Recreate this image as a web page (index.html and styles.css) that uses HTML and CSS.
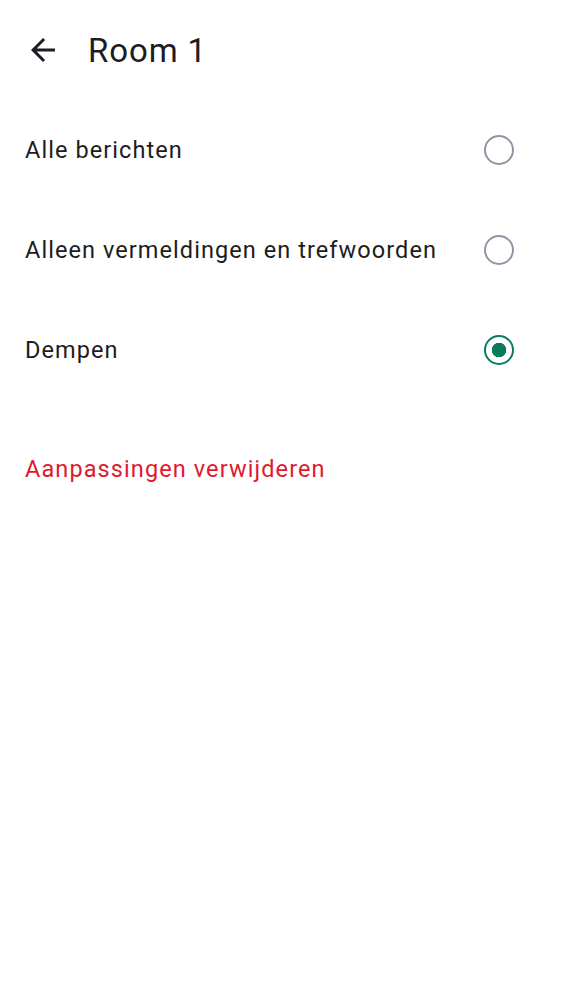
FILE: index.html
```html
<!DOCTYPE html>
<html lang="nl">
<head>
<meta charset="utf-8">
<link rel="stylesheet" href="styles.css">
</head>
<body>
<div class="app">
  <header class="topbar">
    <button class="back" aria-label="Terug">
      <svg width="36" height="36" viewBox="0 0 24 24"><path d="M20 11H7.83l5.59-5.59L12 4l-8 8 8 8 1.41-1.41L7.83 13H20v-2z" fill="#1b1d22"/></svg>
    </button>
    <h1 class="title">Room 1</h1>
  </header>
  <ul class="options">
    <li class="option"><span class="label">Alle berichten</span><span class="radio"></span></li>
    <li class="option"><span class="label">Alleen vermeldingen en trefwoorden</span><span class="radio"></span></li>
    <li class="option"><span class="label">Dempen</span><span class="radio checked"></span></li>
  </ul>
  <div class="reset">Aanpassingen verwijderen</div>
</div>
</body>
</html>
```
FILE: styles.css
```css
* { box-sizing: border-box; }
html, body { margin: 0; padding: 0; background: #fff; }
body { font-family: Roboto, "Noto Sans", sans-serif; color: #1b1d22; }
.app { width: 562px; }
.topbar { display: flex; align-items: center; height: 100px; padding-left: 25px; }
.back { border: 0; background: none; padding: 0; width: 36px; height: 36px; display: flex; }
.title { margin: 0 0 0 27px; font-size: 33px; font-weight: 400; line-height: 1; letter-spacing: 0.9px; }
.options { list-style: none; margin: 0; padding: 0; }
.option { display: flex; align-items: center; justify-content: space-between; height: 100px; padding: 0 48px 0 25px; }
.label { font-size: 23.5px; letter-spacing: 1.07px; }
.radio { width: 30px; height: 30px; border-radius: 50%; border: 2.5px solid #8d97a3; }
.radio.checked { border-color: #0a7b5e; background: radial-gradient(circle, #0a7b5e 0 7px, #fff 7.5px); }
.reset { padding: 55px 25px 0; font-size: 23.5px; letter-spacing: 1.1px; color: #e0192e; }
```
